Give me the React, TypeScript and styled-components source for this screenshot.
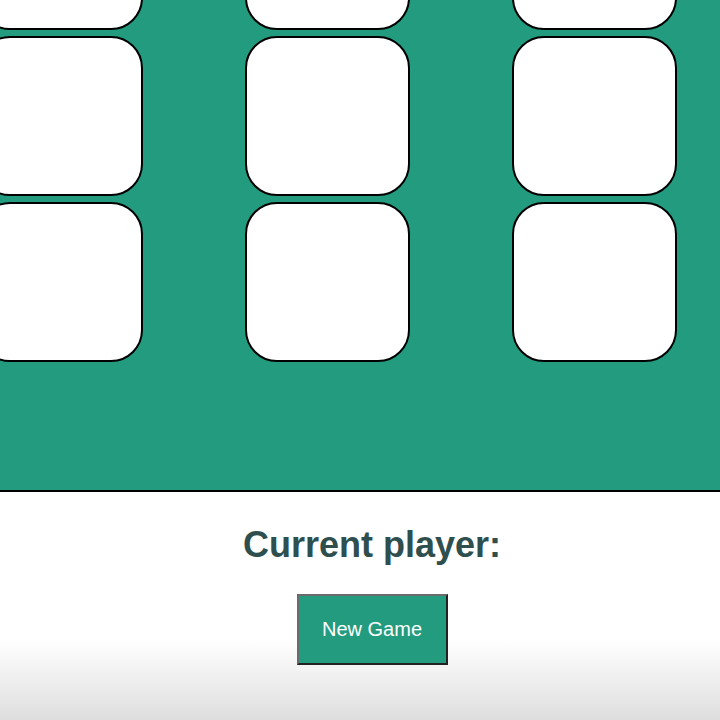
import React from "react";
import styled, { createGlobalStyle } from "styled-components";

const Global = createGlobalStyle`
  html, body { margin: 0; padding: 0; }
  body {
    width: 720px;
    height: 720px;
    overflow: hidden;
    font-family: "Liberation Sans", Arial, sans-serif;
    background: #ffffff;
  }
`;

const Page = styled.div`
  width: 720px;
  height: 720px;
  overflow: hidden;
  display: flex;
  flex-direction: column;
  background: linear-gradient(to bottom, #ffffff 0px, #ffffff 640px, #dedede 720px);
`;

const Board = styled.div`
  flex: none;
  height: 490px;
  background: #239b7f;
  border-bottom: 2px solid #000;
  overflow: hidden;
  box-sizing: content-box;
`;

const Grid = styled.div`
  display: grid;
  grid-template-columns: repeat(3, 165px);
  grid-auto-rows: 160px;
  column-gap: 102px;
  row-gap: 6px;
  margin-top: -130px;
  margin-left: -22px;
`;

const Cell = styled.div`
  box-sizing: border-box;
  background: #ffffff;
  border: 2px solid #000;
  border-radius: 32px;
`;

const Footer = styled.div`
  display: flex;
  flex-direction: column;
  align-items: center;
  padding-left: 24px;
`;

const Title = styled.h2`
  margin: 32px 0 0;
  font-size: 36px;
  line-height: 42px;
  font-weight: 700;
  color: #2f4f4f;
`;

const Button = styled.button`
  margin-top: 28px;
  width: 151px;
  height: 71px;
  background: #239b7f;
  color: #ffffff;
  font-family: "Liberation Sans", Arial, sans-serif;
  font-size: 20px;
  border-style: solid;
  border-width: 2px;
  border-color: #6b6b6b #222222 #222222 #6b6b6b;
  padding: 0;
  cursor: pointer;
`;

export default function App() {
  const cells = Array.from({ length: 9 }, (_, i) => i);
  return (
    <>
      <Global />
      <Page>
        <Board>
          <Grid>
            {cells.map((i) => (
              <Cell key={i} />
            ))}
          </Grid>
        </Board>
        <Footer>
          <Title>Current player:</Title>
          <Button>New Game</Button>
        </Footer>
      </Page>
    </>
  );
}
